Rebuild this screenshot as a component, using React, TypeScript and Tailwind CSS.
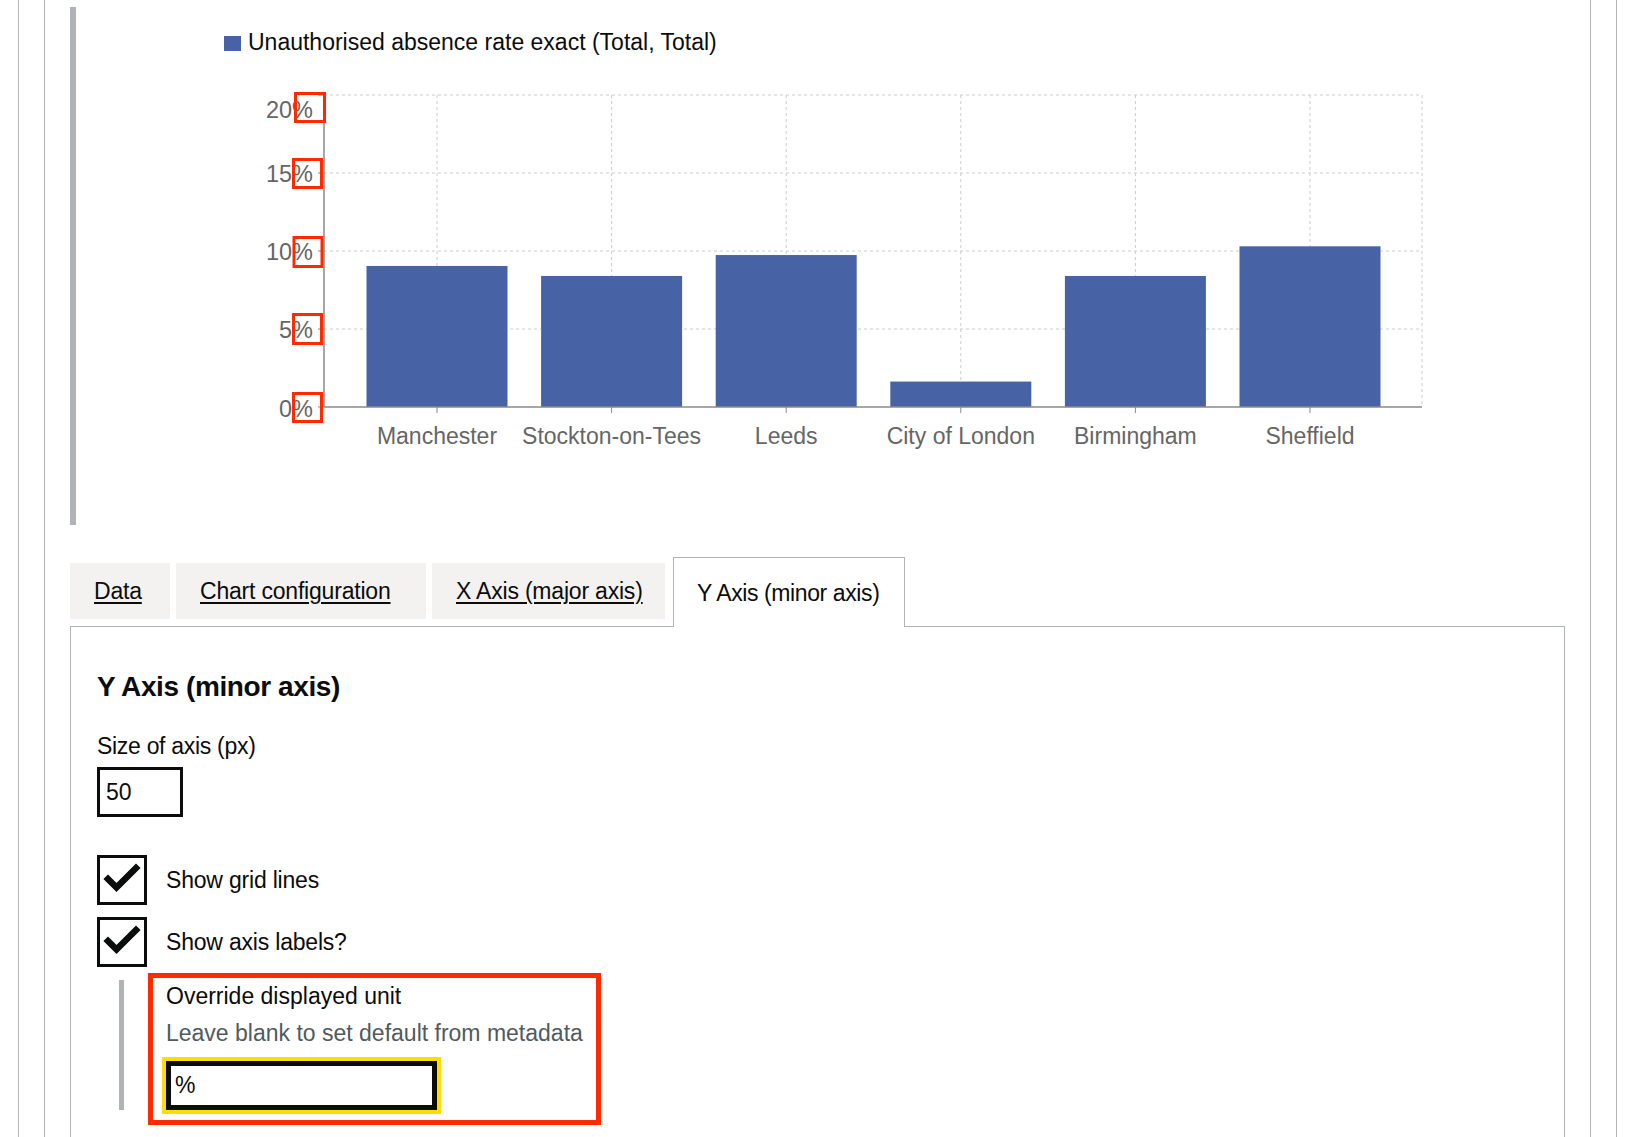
const BAR = '#4763a5';
const AXIS = '#8a8a8a';
const GRID = '#cccccc';
const RED = '#ff2b00';

const FONT = "'Liberation Sans', Arial, sans-serif";

const plotLeft = 324;
const plotRight = 1422;
const plotTop = 95;
const plotBottom = 407;
const pxPerUnit = (plotBottom - plotTop) / 20;

const rows = [
  { name: 'Manchester', value: 9.04 },
  { name: 'Stockton-on-Tees', value: 8.4 },
  { name: 'Leeds', value: 9.74 },
  { name: 'City of London', value: 1.63 },
  { name: 'Birmingham', value: 8.4 },
  { name: 'Sheffield', value: 10.3 },
];

const firstTick = 437;
const step = 174.6;
const barWidth = 141;

// y label boxes drawn round the unit, as in the annotated screenshot
const yTicks = [
  { v: 20, labelY: 118, box: { x: 295.5, y: 93.5, w: 29, h: 28 } },
  { v: 15, labelY: 181.5, box: { x: 293.5, y: 159.5, w: 28, h: 28 } },
  { v: 10, labelY: 260, box: { x: 294, y: 237.5, w: 28, h: 29 } },
  { v: 5, labelY: 338, box: { x: 293.5, y: 314.5, w: 28, h: 29 } },
  { v: 0, labelY: 416.5, box: { x: 293.5, y: 393.5, w: 28, h: 28 } },
];

function BarChart() {
  const yOf = (v: number) => plotBottom - v * pxPerUnit;
  const tickXs = rows.map((_, i) => firstTick + i * step);

  return (
    <svg
      width={1489}
      height={518}
      viewBox="76 7 1489 518"
      style={{ fontFamily: FONT }}
      className="block"
    >
      {/* legend */}
      <rect x={224} y={36} width={17} height={15} fill={BAR} />
      <text x={248} y={50} fontSize={23} fill="#0b0c0c">
        Unauthorised absence rate exact (Total, Total)
      </text>

      {/* grid */}
      {[20, 15, 10, 5].map((v) => (
        <line
          key={v}
          x1={plotLeft}
          x2={plotRight}
          y1={yOf(v)}
          y2={yOf(v)}
          stroke={GRID}
          strokeDasharray="3 3"
        />
      ))}
      {[...tickXs, plotRight].map((x) => (
        <line
          key={x}
          x1={x}
          x2={x}
          y1={plotTop}
          y2={plotBottom}
          stroke={GRID}
          strokeDasharray="3 3"
        />
      ))}

      {/* bars */}
      {rows.map((r, i) => (
        <rect
          key={r.name}
          x={tickXs[i] - barWidth / 2}
          y={yOf(r.value)}
          width={barWidth}
          height={plotBottom - yOf(r.value)}
          fill={BAR}
        />
      ))}

      {/* axes */}
      <line x1={plotLeft} x2={plotLeft} y1={plotTop} y2={plotBottom} stroke={AXIS} strokeWidth={1.5} />
      <line x1={plotLeft} x2={plotRight} y1={plotBottom} y2={plotBottom} stroke={AXIS} strokeWidth={1.5} />

      {yTicks.map((t) => (
        <g key={t.v}>
          <line x1={plotLeft - 6} x2={plotLeft} y1={yOf(t.v)} y2={yOf(t.v)} stroke={AXIS} />
          <text x={313} y={t.labelY} fontSize={23.5} fill="#666666" textAnchor="end">
            {t.v}%
          </text>
          <rect
            x={t.box.x}
            y={t.box.y}
            width={t.box.w}
            height={t.box.h}
            fill="none"
            stroke={RED}
            strokeWidth={3}
          />
        </g>
      ))}

      {rows.map((r, i) => (
        <g key={r.name}>
          <line x1={tickXs[i]} x2={tickXs[i]} y1={plotBottom} y2={plotBottom + 6} stroke={AXIS} />
          <text x={tickXs[i]} y={444} fontSize={23} fill="#666666" textAnchor="middle">
            {r.name}
          </text>
        </g>
      ))}
    </svg>
  );
}

function Check() {
  return (
    <svg width={50} height={50} viewBox="0 0 50 50" className="block">
      <polyline
        points="11,24 19.5,32.5 39,13"
        fill="none"
        stroke="#0b0c0c"
        strokeWidth={6.5}
        strokeLinecap="square"
      />
    </svg>
  );
}

function CheckboxItem({ label }: { label: string }) {
  return (
    <div className="flex items-center">
      <div className="w-[50px] h-[50px] border-[3px] border-[#0b0c0c] bg-white flex items-center justify-center">
        <div className="-m-[3px]">
          <Check />
        </div>
      </div>
      <span className="ml-[19px] text-[23px] leading-[30px] tracking-[-0.2px]">{label}</span>
    </div>
  );
}

const tabs = [
  { label: 'Data', width: 'w-[100px]' },
  { label: 'Chart configuration', width: 'w-[250px]' },
  { label: 'X Axis (major axis)', width: 'w-[233px]' },
];

export default function App() {
  return (
    <div className="min-h-[1137px] bg-white text-[#0b0c0c] font-['Liberation_Sans',Arial,sans-serif]">
      <div className="ml-[18px] mr-[28px] border-x border-[#b1b4b6] min-h-[1137px]">
        <div className="ml-[25px] mr-[25px] border-x border-[#b1b4b6] min-h-[1137px] pl-[25px] pr-[25px]">
          <div className="pt-[7px]">
            <div className="border-l-[6px] border-[#b1b4b6] h-[518px]">
              <BarChart />
            </div>
          </div>

          {/* tabs */}
          <div className="mt-[32px] flex items-start border-b border-[#b1b4b6] h-[70px]">
            {tabs.map((t) => (
              <a
                key={t.label}
                href="#"
                className={`${t.width} mt-[6px] mr-[6px] h-[56px] bg-[#f3f2f1] pl-[24px] flex items-center text-[23px] tracking-[-0.2px] underline underline-offset-[3px] decoration-[1.5px] text-[#0b0c0c] whitespace-nowrap`}
              >
                {t.label}
              </a>
            ))}
            <div className="ml-[2px] w-[232px] h-[70px] bg-white border-x border-t border-[#b1b4b6] pl-[23px] pt-[20px] text-[23px] leading-[30px] tracking-[-0.4px] whitespace-nowrap relative z-10">
              Y Axis (minor axis)
            </div>
          </div>

          {/* panel */}
          <div className="-mt-px border-x border-b border-[#b1b4b6] pl-[26px] pt-[43px] pb-[40px] min-h-[540px]">
            <h2 className="text-[28px] leading-[36px] font-bold tracking-[-0.4px]">Y Axis (minor axis)</h2>

            <div className="mt-[26px] text-[23px] leading-[30px] tracking-[-0.3px]">Size of axis (px)</div>
            <div className="mt-[6px] w-[86px] h-[50px] border-[3px] border-[#0b0c0c] pl-[6px] flex items-center text-[23px]">
              50
            </div>

            <div className="mt-[38px] flex flex-col gap-[12px]">
              <CheckboxItem label="Show grid lines" />
              <CheckboxItem label="Show axis labels?" />
            </div>

            <div className="relative mt-[13px] ml-[22px] border-l-[5px] border-[#b1b4b6] pl-[42px]">
              <div className="text-[23px] leading-[30px] pt-[1px]">Override displayed unit</div>
              <div className="mt-[7px] text-[23px] leading-[30px] text-[#505a5f]">
                Leave blank to set default from metadata
              </div>
              <div className="mt-[13px] w-[271px] h-[49px] border-[5px] border-[#0b0c0c] bg-white shadow-[0_0_0_4px_#ffdd00] pl-[4px] flex items-center text-[23px]">
                %
              </div>
              <div className="absolute left-[24px] top-[-7px] w-[453px] h-[152px] border-[5px] border-[#ff2b00] pointer-events-none" />
            </div>
          </div>
        </div>
      </div>
    </div>
  );
}
